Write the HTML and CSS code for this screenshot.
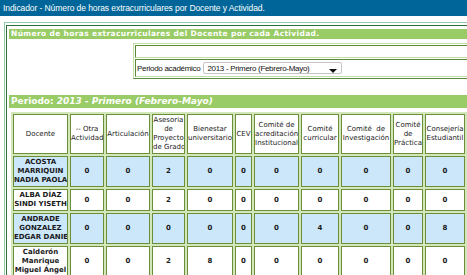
FILE: index.html
```html
<!DOCTYPE html>
<html lang="es">
<head>
    <meta charset="UTF-8">
    <title>Indicador - Número de horas extracurriculares por Docente y Actividad</title>
    <link rel="stylesheet" href="styles.css">
</head>
<body>
    <div class="titlebar">Indicador - Número de horas extracurriculares por Docente y Actividad.</div>

    <div class="frame">
        <div class="frame-inner">
            <div class="bar">Número de horas extracurriculares del Docente por cada Actividad.</div>

            <div class="filter">
                <div class="filter-row blank"></div>
                <div class="filter-row period">
                    <span class="filter-label">Periodo académico</span>
                    <span class="select">
                        <span class="select-text">2013 - Primero (Febrero-Mayo)</span>
                        <svg class="select-arrow" width="8" height="4" viewBox="0 0 8 4"><path d="M0 0H8L4 4Z" fill="#111"/></svg>
                    </span>
                </div>
            </div>

            <div class="bar period-bar">Periodo: <em>2013 - Primero (Febrero-Mayo)</em></div>

            <table class="grid">
                <colgroup>
                    <col class="c-docente">
                    <col class="c-otra">
                    <col class="c-artic">
                    <col class="c-ases">
                    <col class="c-bien">
                    <col class="c-cev">
                    <col class="c-acred">
                    <col class="c-curr">
                    <col class="c-inv">
                    <col class="c-prac">
                    <col class="c-cons">
                </colgroup>
                <tr>
                    <th>Docente</th>
                    <th>-- Otra<br>Actividad</th>
                    <th>Articulación</th>
                    <th>Asesoria<br>de<br>Proyecto<br>de Grado</th>
                    <th>Bienestar<br>universitario</th>
                    <th>CEV</th>
                    <th>Comité de<br>acreditación<br>Institucional</th>
                    <th>Comité<br>curricular</th>
                    <th>Comité&nbsp; de<br>Investigación</th>
                    <th>Comité<br>de<br>Práctica</th>
                    <th>Consejería<br>Estudiantil</th>
                </tr>
                <tr class="alt">
                    <td>ACOSTA<br>MARRIQUIN<br>NADIA PAOLA</td>
                    <td>0</td><td>0</td><td>2</td><td>0</td><td>0</td><td>0</td><td>0</td><td>0</td><td>0</td><td>0</td>
                </tr>
                <tr>
                    <td>ALBA DÍAZ<br>SINDI YISETH</td>
                    <td>0</td><td>0</td><td>2</td><td>0</td><td>0</td><td>0</td><td>0</td><td>0</td><td>0</td><td>0</td>
                </tr>
                <tr class="alt">
                    <td>ANDRADE<br>GONZALEZ<br>EDGAR DANIE</td>
                    <td>0</td><td>0</td><td>0</td><td>0</td><td>0</td><td>0</td><td>4</td><td>0</td><td>0</td><td>8</td>
                </tr>
                <tr>
                    <td>Calderón<br>Manrique<br>Miguel Ángel</td>
                    <td>0</td><td>0</td><td>2</td><td>8</td><td>0</td><td>0</td><td>0</td><td>0</td><td>0</td><td>0</td>
                </tr>
                <tr class="alt">
                    <td></td>
                    <td></td><td></td><td></td><td></td><td></td><td></td><td></td><td></td><td></td><td></td>
                </tr>
            </table>
        </div>
    </div>
</body>
</html>
```

FILE: styles.css
```css
html, body {
    margin: 0;
    overflow: hidden;
    background-color: white;
}

body {
    font-family: "DejaVu Sans", Verdana, sans-serif;
    color: #111;
}


.titlebar {
    background-color: #006699;
    color: white;
    height: 16px;
    line-height: 16px;
    padding-left: 3px;
    font-family: "Liberation Sans", Arial, sans-serif;
    font-size: 8.5px;
    letter-spacing: -0.08px;
    white-space: nowrap;
}


/* outer box, light line then dark line */
.frame {
    width: 620px;
    margin: 6px 0 0 4px;
    border: 1px solid #8fcba6;
    border-right: none;
    border-bottom: none;
    padding: 2px 0 0 1px;
}

.frame-inner {
    border-top: 1px solid #2e6f3c;
    border-left: 1px solid #2e6f3c;
    padding: 3px 0 0 2px;
}


.bar {
    background-color: #99cc66;
    color: white;
    font-weight: bold;
    font-size: 7.5px;
    letter-spacing: 0.35px;
    height: 10px;
    line-height: 10px;
    padding-left: 2px;
    white-space: nowrap;
}


.filter {
    margin: 4px 0 0 124px;
    border: 1px solid;
    border-color: #c3dfa6 #5b8a35 #5b8a35 #c3dfa6;
    border-right: none;
    padding: 1px 0 1px 1px;
}

.filter-row {
    border: 1px solid;
    border-color: #5b8a35 #c3dfa6 #c3dfa6 #5b8a35;
    border-right: none;
}

.filter-row + .filter-row {
    margin-top: 1px;
}

.filter-row.blank {
    height: 11px;
}

.filter-row.period {
    height: 16px;
    display: flex;
    align-items: center;
    gap: 3px;
    padding-left: 1px;
    font-family: "Liberation Sans", Arial, sans-serif;
    font-size: 8px;
    letter-spacing: -0.3px;
    white-space: nowrap;
}

.select {
    display: flex;
    align-items: center;
    width: 134px;
    height: 10px;
    border: 1px solid #c4c4c4;
    border-radius: 2px;
    padding-left: 3px;
    position: relative;
}

.select-arrow {
    position: absolute;
    right: 4px;
    bottom: 0;
}


.period-bar {
    margin-top: 16px;
    height: 13px;
    line-height: 13px;
    font-size: 9px;
    letter-spacing: 0;
}

.period-bar em {
    font-style: italic;
}


.grid {
    margin: 4px 0 0 2px;
    table-layout: fixed;
    width: 456px;
    border-collapse: separate;
    border-spacing: 2px;
    background-color: #d3e7bb;
    font-size: 7px;
}

.c-docente { width: 55px; }
.c-otra { width: 34px; }
.c-artic { width: 44px; }
.c-ases { width: 33px; }
.c-bien { width: 46px; }
.c-cev { width: 17px; }
.c-acred { width: 45px; }
.c-curr { width: 38px; }
.c-inv { width: 50px; }
.c-prac { width: 30px; }
.c-cons { width: 40px; }

.grid th,
.grid td {
    border: 1px solid #6b8e3a;
    background-color: white;
    text-align: center;
    vertical-align: middle;
    padding: 1px 0;
    line-height: 9px;
    white-space: nowrap;
    overflow: hidden;
    color: #1a1a1a;
}

.grid th {
    font-weight: normal;
    height: 36px;
}

.grid td {
    font-weight: bold;
}

.grid tr.alt td {
    background-color: #cde7fa;
}
```
